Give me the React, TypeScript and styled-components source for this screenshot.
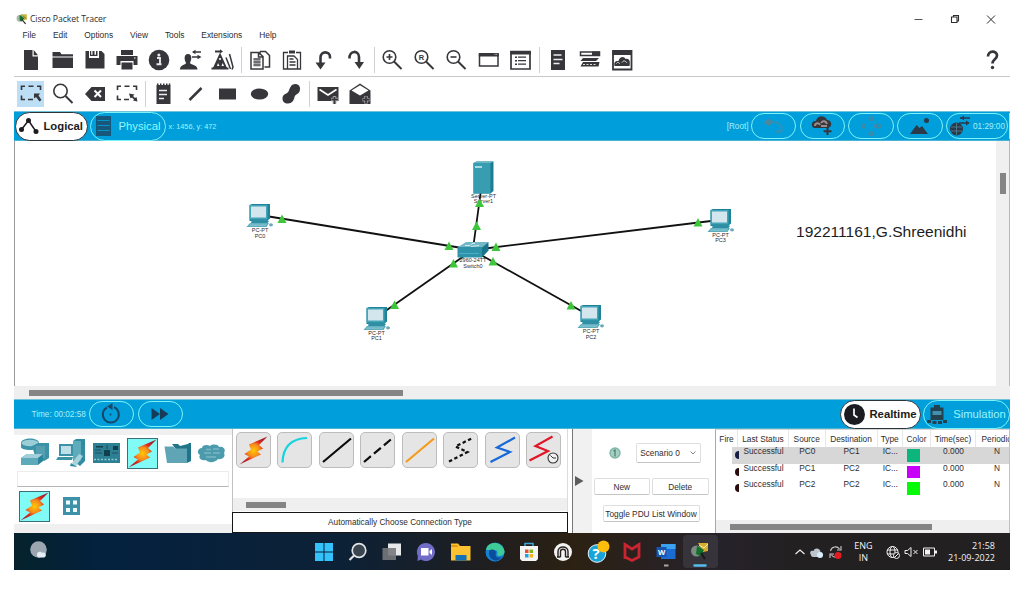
import React from 'react';
import styled, { createGlobalStyle, css } from 'styled-components';

const INK = '#37363b';
const BLUE = '#009fdc';
const CYAN = '#7df3f8';

const GlobalStyle = createGlobalStyle`
  * { box-sizing: border-box; }
  body {
    margin: 0;
    background: #fff;
    font-family: "Liberation Sans", Arial, sans-serif;
    font-size: 8.3px;
    color: #2e2e30;
    overflow: hidden;
  }
  svg { display: block; flex: none; }
`;

const Window = styled.div`
  width: 996px;
  height: 570px;
  margin-left: 14px;
  padding-top: 10px;
  display: flex;
  flex-direction: column;
  white-space: nowrap;
`;

const TitleBar = styled.header`
  height: 17px;
  display: flex;
  align-items: center;
  gap: 2px;
  padding: 0 13px 0 2px;
`;

const Title = styled.h1`
  margin: 0;
  flex: 1;
  font: 400 8.7px/16px "Open Sans", "Liberation Sans", sans-serif;
  letter-spacing: -0.1px;
`;

const WindowControls = styled.div`
  display: flex;
  gap: 24.5px;
`;

const MenuBar = styled.nav`
  height: 16px;
  display: flex;
  align-items: center;
  gap: 16.9px;
  padding-left: 8.5px;
  font-size: 8.4px;
`;

const Toolbar = styled.div<{ $height: number; $ruled?: boolean }>`
  height: ${p => p.$height}px;
  display: flex;
  align-items: center;
  padding-left: 1px;
  border-bottom: ${p => (p.$ruled ? '1px solid #c9c9c9' : 'none')};
`;

const Tool = styled.button<{ $active?: boolean }>`
  width: 32px;
  height: 26px;
  padding: 0;
  border: 0;
  display: flex;
  align-items: center;
  justify-content: center;
  color: ${INK};
  border-radius: 2px;
  background: ${p => (p.$active ? 'linear-gradient(90deg, transparent 2px, #bddff6 2px 29px, transparent 29px)' : 'none')};
`;

const HelpTool = styled(Tool)`
  margin-right: 2px;
`;

const Separator = styled.span<{ $width: number }>`
  width: ${p => p.$width}px;
  height: 26px;
  background: linear-gradient(#d2d2d2, #d2d2d2) center / 1px 100% no-repeat;
`;

const Spacer = styled.span`flex: 1;`;

const BlueBar = styled.div<{ $height: number }>`
  height: ${p => p.$height}px;
  display: flex;
  align-items: center;
  background: ${BLUE};
  border-top: 1px solid #6cc3da;
  border-bottom: 1px solid #4bb4d2;
  color: #a5f0f7;
`;

const BarText = styled.span<{ $size?: number; $left?: number; $right?: number }>`
  font-size: ${p => p.$size ?? 8.2}px;
  margin-left: ${p => p.$left ?? 0}px;
  margin-right: ${p => p.$right ?? 0}px;
`;

const Pill = styled.button<{ $width: number; $gap?: number }>`
  width: ${p => p.$width}px;
  height: 26px;
  margin-left: ${p => p.$gap ?? 0}px;
  padding: 0;
  border: 1.5px solid ${CYAN};
  border-radius: 13px;
  background: transparent;
  color: #a5f0f7;
  font: 8.2px "Liberation Sans", sans-serif;
  display: flex;
  align-items: center;
  justify-content: center;
  gap: 2px;
`;

const ModeTab = styled(Pill)<{ $on?: boolean }>`
  height: 29px;
  border-radius: 14.5px;
  font-size: 11.3px;
  gap: 6px;
  color: #98f5fa;
  ${p => p.$on && css`
    background: #fff;
    border-color: #28333c;
    color: #1c1c20;
    font-weight: 700;
    gap: 4px;
  `}
`;

const Workspace = styled.main`
  height: 245px;
  display: flex;
  border-left: 1px solid #9b9b9b;
  border-right: 1px solid #b8b8b8;
`;

const Canvas = styled.div`
  position: relative;
  flex: 1;
`;

const Wires = styled.svg`
  position: absolute;
  inset: 0;
`;

const Node = styled.div<{ $x: number; $y: number }>`
  position: absolute;
  left: ${p => p.$x - 15}px;
  top: ${p => p.$y - 141}px;
  transform: translateX(-50%);
  display: flex;
  flex-direction: column;
  align-items: center;
  font-size: 5.5px;
  line-height: 5.6px;
  text-align: center;
`;

const Note = styled.div`
  position: absolute;
  left: 781px;
  top: 82px;
  font-size: 15.55px;
  line-height: 18px;
  color: #1d1d1d;
`;

const VScroll = styled.div`
  width: 13px;
  background: #f0f0f0;
  padding: 32px 0 0 3.5px;
  &::before {
    content: '';
    display: block;
    width: 6px;
    height: 21px;
    background: #858585;
  }
`;

const HScroll = styled.div<{ $height: number; $from: number; $length: number }>`
  height: ${p => p.$height}px;
  flex: none;
  background: #efefef;
  display: flex;
  align-items: center;
  padding-left: ${p => p.$from}px;
  &::before {
    content: '';
    width: ${p => p.$length}px;
    height: 6px;
    background: #858585;
  }
`;

const BottomDock = styled.section`
  height: 104px;
  display: flex;
`;

const DevicePanel = styled.div`
  width: 218px;
  border-top: 6px solid #f0f0f0;
  border-bottom: 9px solid #f0f0f0;
  padding: 2px 3px 0;
`;

const DeviceRow = styled.div`
  height: 32px;
  display: flex;
  align-items: center;
`;

const DeviceCell = styled.div<{ $width?: number }>`
  width: ${p => p.$width ?? 35.6}px;
  display: flex;
  justify-content: center;
`;

const BoltTile = styled.div`
  width: 31px;
  height: 31px;
  border: 1px solid #3b6e78;
  background: #80fbf6;
  display: flex;
  align-items: center;
  justify-content: center;
`;

const SubtypeBox = styled.div`
  height: 16px;
  margin: 2px 0 3px;
  border: 1px solid #ececec;
  border-bottom-color: #b5b5b5;
`;

const CablePanel = styled.div`
  width: 336px;
  display: flex;
  flex-direction: column;
  border-left: 1px solid #c2c2c2;
  border-right: 1px solid #dcdcdc;
`;

const CableRow = styled.div`
  height: 69px;
  display: flex;
  gap: 6.5px;
  padding: 3px 0 0 2.5px;
`;

const CableButton = styled.button`
  width: 35px;
  height: 36px;
  padding: 0;
  border: 1px solid #bcbcbc;
  border-radius: 5px;
  background: #e5e5e5;
  display: flex;
  align-items: center;
  justify-content: center;
`;

const CableCaption = styled.div`
  height: 21px;
  margin: 1px -1px 0;
  border: 1px solid #151515;
  text-align: center;
  line-height: 19px;
  font-size: 8.25px;
`;

const Collapse = styled.div`
  width: 20px;
  margin-left: 4px;
  border-left: 1px solid #777;
  background: #f1f1f1;
  display: flex;
  align-items: center;
  padding-left: 2px;
`;

const Scenario = styled.div`
  width: 123px;
  padding-top: 14px;
  display: flex;
  flex-direction: column;
  align-items: flex-start;
`;

const ScenarioRow = styled.div<{ $top?: number; $left: number; $gap?: number }>`
  display: flex;
  align-items: center;
  gap: ${p => p.$gap ?? 0}px;
  margin: ${p => p.$top ?? 0}px 0 0 ${p => p.$left}px;
`;

const Field = styled.button<{ $width: number; $height: number }>`
  width: ${p => p.$width}px;
  height: ${p => p.$height}px;
  padding: 0;
  border: 1px solid #dedede;
  border-bottom-color: #c6c6c6;
  border-radius: 2px;
  background: #fff;
  color: #2e2e30;
  font: 8.3px "Liberation Sans", sans-serif;
  display: flex;
  align-items: center;
  justify-content: center;
  gap: 9px;
  overflow: hidden;
`;

const PduList = styled.div`
  flex: 1;
  min-width: 0;
  border-left: 1px solid #a8a8a8;
  border-right: 1px solid #c0c0c0;
  border-top: 1px solid #d5d5d5;
  display: flex;
  flex-direction: column;
`;

const gridColumns = css`
  display: grid;
  grid-template-columns: 22px 51px 36.5px 52px 25.5px 28px 45px 42px;
`;

const PduHead = styled.div`
  ${gridColumns}
  height: 17px;
  line-height: 18px;
  text-align: center;
  overflow: hidden;
`;

const HeadCell = styled.span`
  border-right: 1px solid #e8e8e8;
`;

const PduRow = styled.div<{ $selected?: boolean }>`
  ${gridColumns}
  height: 16.5px;
  line-height: 8px;
  text-align: center;
  overflow: hidden;
  background: ${p => (p.$selected ? 'linear-gradient(90deg, #fff 16px, #d7d7d7 16px)' : 'none')};
`;

const FireDot = styled.span<{ $color: string }>`
  width: 4px;
  height: 8px;
  margin: 4px 0 0 19px;
  border-radius: 4px 0 0 4px;
  background: ${p => p.$color};
`;

const Swatch = styled.span<{ $color: string }>`
  width: 12.5px;
  height: 12.5px;
  margin: 2px 0 0 4px;
  background: ${p => p.$color};
`;

const Taskbar = styled.footer`
  height: 37px;
  flex: none;
  display: flex;
  align-items: center;
  padding: 0 15px;
  color: #f2f2f2;
  font: 9px/11.5px "Open Sans", "Liberation Sans", sans-serif;
  background: linear-gradient(90deg, #05222c 0, #04213f 90px, #0d2136 330px, #1f1e20 470px, #2c2112 560px, #292120 630px, #26222a 700px, #232022 780px);
`;

const TaskIcons = styled.div`
  display: flex;
  margin-left: 257.5px;
`;

const TaskIcon = styled.div<{ $active?: boolean }>`
  width: 34.25px;
  height: 33px;
  display: flex;
  align-items: center;
  justify-content: center;
  border-radius: 4px;
  background: ${p => (p.$active ? '#37333a' : 'none')};
`;

const Tray = styled.div`
  display: flex;
  align-items: center;
  margin-left: auto;
`;

const TrayText = styled.div<{ $width: number; $align: 'center' | 'right' }>`
  width: ${p => p.$width}px;
  text-align: ${p => p.$align};
`;

type GlyphProps = { children: React.ReactNode; w?: number; h?: number };
const Glyph = ({ children, w = 24, h = 24 }: GlyphProps) => (
  <svg width={w} height={h} viewBox={`0 0 ${w} ${h}`} fill="currentColor">{children}</svg>
);

const stroke = (width: number, color = 'currentColor') => ({
  fill: 'none', stroke: color, strokeWidth: width,
});

const mainTools: React.ReactNode[][] = [
  [
    <path d="M5 2h8.500v6.500H19V22H5zM14.700 2L19 7.300h-4.300z" />,
    <path d="M1.500 4h7.500l1.500 2.200h11.500v2.200H1.500zM1.500 9.500H22V20H1.500z" />,
    <path d="M2.500 3H6v7h10V3h2.500l3 3v14.500h-19zM9.500 3h2v4.500h-2zM13 3h1.500v5H7V3h1.200v3.700H13z" />,
    <><path d="M6 2h12v5H6zM1.500 8h21v9h-4v-4h-13v4h-4zM6.500 14.500h11v7h-11z" /><path d="M19 10h1.500" {...stroke(1.2, '#fff')} /></>,
    <><circle cx="12" cy="12" r="10.3" /><path d="M10 10h3v6M9.500 16.300h5" {...stroke(1.9, '#e8e8e8')} /><circle cx="11.900" cy="7" r="1.500" fill="#e8e8e8" /></>,
    <><path d="M9 6c2.500 0 3.500 2 3.300 4.500-.2 2-.9 3-1.300 4.500 0 1.500 7.500 1.500 7.500 6.500H1c0-5 6.500-5 6-6.500-.5-1.500-1.300-2.500-1.400-4.500C5.500 8 6.500 6 9 6z" /><path d="M14 4h8M13 9h8" {...stroke(1.300)} /><path d="M16.500 1.700v4.600L13 4zM18.500 6.700v4.600L22.500 9z" /></>,
    <><path d="M4 2.500h5V1.200L12 3.500 9 5.500V4.500H4zM9 4.500l7.500 16.500h-15z" /><path d="M.500 19.500h17v2H.500z" /><circle cx="9" cy="11" r="1.100" fill="#fff" /><path d="M6 18l1-3 1.500 3zM10.500 18l1.200-3 1.300 3z" fill="#fff" /><path d="M15 9.500l4.500 11.500M18.500 6l3.500 13-1 2.500" {...stroke(1.500)} /></>,
  ],
  [
    <><path d="M12 3.500h5.500l4 4v11.500h-5M12 6.500V3.500" {...stroke(1.500)} /><path d="M3 4.500h7.500l4.500 4v12.500H3zM10.500 4.500v4.500H15" {...stroke(1.500)} /><path d="M5.500 10h7v8.500h-7z" opacity=".45" /><path d="M5.500 11h7M5.500 14h7M5.500 17h7" {...stroke(1)} /></>,
    <><path d="M8 4.500H3.500v16.500H8M16 4.500h4.500V21H7.500V8h6.500l3.500 3.500V21" {...stroke(1.300)} /><path d="M9 2.500h6v3H9z" /><path d="M9.500 11h4M9.500 14h6M9.500 17h6" {...stroke(1.300)} /></>,
    <><path d="M8.500 17V9.500c0-7 9.500-6.500 9.500-.5v1.500" {...stroke(2.600)} /><path d="M3.500 14.500h10l-5 7z" /></>,
    <><path d="M5.500 10.500c-.5-8.500 9.500-8.500 9.500-1.500v6" {...stroke(2.600)} /><path d="M10.500 14h9.500l-4.700 7z" /></>,
  ],
  [
    <><circle cx="9.500" cy="9" r="6.300" {...stroke(1.600)} /><path d="M14 13.500l7.500 7.500" {...stroke(1.900)} /><path d="M9.500 6v6M6.500 9h6" {...stroke(1.600)} /></>,
    <><circle cx="9.500" cy="9" r="6.300" {...stroke(1.600)} /><path d="M14 13.500l7.500 7.500" {...stroke(1.900)} /><text x="6.700" y="11.700" fontSize="7.500" fontWeight="700">R</text></>,
    <><circle cx="9.500" cy="9" r="6.300" {...stroke(1.600)} /><path d="M14 13.500l7.500 7.500" {...stroke(1.900)} /><path d="M6.500 9h6" {...stroke(1.600)} /></>,
    <><path d="M3.500 6.500h18.500v11.500H3.500z" {...stroke(1.500)} /><path d="M2.800 5h20v3.500h-20z" /><path d="M18.500 6.300h1M20.200 6.300h1" {...stroke(.8, '#fff')} /></>,
    <><path d="M3 3.500h19v17.500H3z" {...stroke(1.700)} /><path d="M2.300 3h20.500v3.500H2.300zM7 8.500h2v1.500H7zM7 12h2v1.500H7zM7 15.500h2v1.500H7z" /><path d="M10 9.200h8M10 12.700h8M10 16.200h8" {...stroke(1.300)} /></>,
  ],
  [
    <><path d="M5 2h14v20H5z" /><path d="M7.500 7h8M7.500 11.500h9M7.500 15.500h6" {...stroke(1.600, '#eee')} /></>,
    <><path d="M2.500 4h19v3.500h-19z" {...stroke(1.500)} /><path d="M14 3.500h8v4h-8zM5 10h16l-3 3H2.500zM5 14h16.500l-1 4.500H2.500z" /><path d="M5 16.500h13" {...stroke(1.200, '#ddd')} strokeDasharray="2 1.500" /></>,
    <><path d="M3 3h18.500v18.500H3z" {...stroke(1.800)} /><path d="M2.500 3h19.500v4H2.500zM4.500 18c-1-5 2-5 4-5 1-5 6-5 7-2 4-1 5 3 4 7z" /><path d="M6.500 15.500c1-2 3-1 3 .5M12 14.500c2-3 4-1 5 .5" {...stroke(1, '#ddd')} /></>,
  ],
];

const Marquee = ({ dark }: { dark?: boolean }) => (
  <Glyph>
    <path d="M2.500 8V4.300H6M9.500 4.300h5M18 4.300h3.500V8M2.500 13.500v4H6M9 17.500h5" {...stroke(1.600)} />
    {dark
      ? <path d="M15 11.500h6l-1.500 2 3 4.500-2 1.500-3.500-4.500-2 1.500z" />
      : <path d="M14 11.500l5.500 1-1.500 1.500 2 2 1.500-1 1 4.500-4.500-1 1-1-2-2-1.500 1z" />}
  </Glyph>
);

const editTools: React.ReactNode[][] = [
  [
    <Marquee dark />,
    <Glyph><circle cx="9.500" cy="9" r="6.700" {...stroke(1.600)} /><path d="M14.500 14l7 7" {...stroke(2)} /></Glyph>,
    <Glyph><path d="M2 12l6.500-7H22v14H8.500z" /><path d="M11.500 8.500l6.500 6.500M18 8.500l-6.500 6.500" {...stroke(2, '#fff')} /></Glyph>,
    <Marquee />,
  ],
  [
    <Glyph><path d="M5.500 3h14v19h-14zM6 1.500h1.500V4H6zM9 1.500h1.500V4H9zM12 1.500h1.500V4H12zM15 1.500h1.500V4H15zM17.800 1.500h1.500V4h-1.500z" /><path d="M8 8.500h8M8 12.500h8M8 16.500h5" {...stroke(1.500, '#eee')} /></Glyph>,
    <Glyph><path d="M6.500 18L18.500 6" {...stroke(2.500)} /></Glyph>,
    <Glyph><path d="M4 6.500h17v11H4z" /></Glyph>,
    <Glyph><ellipse cx="12.500" cy="12" rx="8.700" ry="5.500" /></Glyph>,
    <Glyph><path d="M3.500 16.500c0-5 4-4 6-7 1.500-3 2-7.500 7-7.500 4 0 5.500 4 4 7.500-1.500 3-4 2.500-5 5.500-.5 3-2.500 6.500-6.500 6.500-3.500 0-5.500-2-5.500-5z" /></Glyph>,
  ],
  [
    <Glyph><path d="M1.500 5h21v14h-21z" /><path d="M3.500 7.500L12 13l8.500-5.500" {...stroke(1.600, '#fff')} /><path d="M18.500 22v-8M15 17.500h7" {...stroke(3.500, '#999')} /><path d="M18.500 22v-7M15.500 17.500h6.500" {...stroke(1.500)} /></Glyph>,
    <Glyph><path d="M1.500 8.500L12 1.500l10.500 7V22h-21z" /><path d="M3.500 8.500L12 3.200l8.500 5.300L12 13.500z" fill="#fff" /><path d="M18 14v7.500M14.500 17.700h7" {...stroke(3.600, '#999')} /><path d="M18 14.500v6.500M15 17.700h6" {...stroke(1.700)} /></Glyph>,
  ],
];

const PcIcon = () => (
  <Glyph w={28} h={24}>
    <path d="M3.500 1L6 0h18v14.500L21 17H3.500z" fill="#1d8398" />
    <path d="M3.500 1h18v14.500h-18z" fill="#45a4b8" />
    <path d="M5 2.500h15V13.500H5z" fill="#d3e6ee" />
    <path d="M6 15.500h14l3 1.500-1.500 2H5z" fill="#2e8fa4" />
    <path d="M4 19h19l-2.500 4H.5z" fill="#53a9bb" />
    <path d="M4 20.200h17M3 21.700h17" stroke="#a9d3dd" strokeWidth=".6" />
    <ellipse cx="25" cy="20.800" rx="2" ry="1.600" fill="#6aa9b9" />
  </Glyph>
);

const ServerIcon = () => (
  <Glyph w={22} h={33}>
    <path d="M1 2l3-1.500h17V30l-3 2.500H1z" fill="#1c7c91" />
    <path d="M1 2h17v30.500H1z" fill="#399db2" />
    <path d="M1 2l3-1.500h17L18 2z" fill="#69b8c8" />
    <path d="M2.500 6h7" stroke="#a8dbe5" strokeWidth="2" />
  </Glyph>
);

const SwitchIcon = () => (
  <Glyph w={32} h={17}>
    <path d="M1 6L9 1h22.500L25 7z" fill="#73b8c6" />
    <path d="M.5 6H25v10.500H.5z" fill="#2e92a8" />
    <path d="M25 6.500L31.500 1v8.500L25 16.500z" fill="#1b7489" />
    <path d="M8 4.500h5l2-2 3 0M14 5.500l8-1" fill="none" stroke="#d8eef3" strokeWidth=".9" />
    <path d="M2 12.500h20" stroke="#4eb0c2" strokeWidth="1" />
  </Glyph>
);

const nodes = [
  { x: 260, y: 204, icon: <PcIcon />, lines: ['PC-PT', 'PC0'] },
  { x: 376.5, y: 306.5, icon: <PcIcon />, lines: ['PC-PT', 'PC1'] },
  { x: 591, y: 305, icon: <PcIcon />, lines: ['PC-PT', 'PC2'] },
  { x: 720.5, y: 208.5, icon: <PcIcon />, lines: ['PC-PT', 'PC3'] },
  { x: 483.5, y: 160.500, icon: <ServerIcon />, lines: ['Server-PT', 'Server1'] },
  { x: 473, y: 241, icon: <SwitchIcon />, lines: ['2960-24TT', 'Switch0'] },
];

const links = [
  [269, 216.500, 462, 248], [481, 190, 473.500, 245], [711, 221, 485, 248.500],
  [384, 312, 464, 256], [583, 312, 481, 255],
];

const linkLights = [
  [282, 219], [449, 246], [479.500, 203], [476.500, 226], [496, 247],
  [698, 222.500], [453.500, 263.500], [394.500, 305], [493, 261.500], [571, 305.500],
];

const Bolt = ({ size = 29, id }: { size?: number; id: string }) => (
  <svg width={size} height={size} viewBox="0 0 29 29">
    <defs>
      <radialGradient id={id} gradientUnits="userSpaceOnUse" cx="14.500" cy="14.500" r="14">
        <stop offset="0" stopColor="#ffc800" />
        <stop offset=".45" stopColor="#f58a1e" />
        <stop offset=".7" stopColor="#e02b1a" />
        <stop offset="1" stopColor="#a8202c" />
      </radialGradient>
    </defs>
    <path d="M28.500.5L10 8.500l2 5L5.500 18 10 20.500.5 28.500 22 18.500l-3.500-3 5.500-3-4-3.500z" fill={`url(#${id})`} />
  </svg>
);

const Devices = {
  network: (
    <Glyph w={30} h={30}>
      <path d="M1 5c0-6 18-6 18 0v4C19 13 1 13 1 9z" fill="#3d94a6" /><ellipse cx="10" cy="5" rx="8.500" ry="3.200" fill="#9ccdd7" />
      <path d="M12 8l6-3h11v15l-5 3-8-2z" fill="#3a93a7" /><path d="M16 8h9v12h-9z" fill="#559fb0" />
      <path d="M1 20l6-4h16v7l-5 4H1z" fill="#2b8499" /><path d="M1 20h17v7H1z" fill="#5daabb" /><path d="M1 20l6-4h16l-5 4z" fill="#a2cfd9" />
    </Glyph>
  ),
  end: (
    <Glyph w={30} h={30}>
      <path d="M17 3l3-2h9v22l-5 5-7-5z" fill="#2f8ca1" /><path d="M17 3h8v20h-8z" fill="#5eabbb" />
      <path d="M3 6h14v12H3z" fill="#3c93a7" /><path d="M5 8h10v8H5z" fill="#bedfe7" />
      <path d="M2 19h15l-1 3H0z" fill="#3b93a6" /><path d="M16 25l7-9 4 2-7 10z" fill="#a6d2db" /><path d="M15 25l5 3 1 1-7-1z" fill="#2f8ca1" />
    </Glyph>
  ),
  board: (
    <Glyph w={28} h={20}>
      <path d="M0 0h27v20H0z" fill="#2d7f93" /><path d="M11 7h6v6h-6zM20 3h5v4h-5zM3 3h7v1.500H3z" fill="#123f4e" />
      <path d="M1 16.500h24" stroke="#8cc9d6" strokeWidth="1.500" strokeDasharray="2 1.500" /><path d="M2 7h6M2 10h7M19 10h6M14 2v4" stroke="#1a5363" strokeWidth="1.200" />
    </Glyph>
  ),
  folder: (
    <Glyph w={28} h={22}>
      <path d="M8 2h6l2 2 8-2 1-1h2v18l-4 2z" fill="#1f7488" /><path d="M.500 4.500h9l2 2H23v14.500H3z" fill="#60a5b5" />
    </Glyph>
  ),
  cloud: (
    <Glyph w={30} h={22}>
      <path d="M5 6c0-3 5-4 8-2 2-2 8-2 9 1 5-1 7 3 5 6 2 4-2 7-6 6-3 4-10 4-12 1-5 1-8-2-6-5-4-2-2-7 2-7z" fill="#4c9bad" />
      <path d="M9 7.500h5M16 7h6M7 11h7M16 11h7M9 15h10" stroke="#78b6c4" strokeWidth="1.300" />
    </Glyph>
  ),
  component: (
    <Glyph w={17} h={20}>
      <path d="M0 1h17v18H0z" fill="#3d92a8" /><path d="M3 4.500h4v4H3zM10 4.500h4v4h-4zM3 12h4v4H3zM10 12h4v4h-4z" fill="#effbfd" />
    </Glyph>
  ),
};

const line = (d: string, color: string, dash?: string) => (
  <svg width="33" height="34" viewBox="0 0 33 34">
    <path d={d} fill="none" stroke={color} strokeWidth="2.200" strokeDasharray={dash} />
  </svg>
);

const cables = [
  <Bolt id="cable-bolt" />,
  line('M4.500 29.500C5 14 13 5.500 29 5', '#16d4e0'),
  line('M3 29L31 5.500', '#0c0c0c'),
  line('M3 29L31 5.500', '#0c0c0c', '9 4'),
  line('M3 29L31 5.500', '#f59b1c'),
  line('M5 28.500L23.500 19 11.500 13.500 28.500 5', '#111', '3.500 2.500'),
  line('M4.500 29L24 19 11 14.500 29 4.500', '#1769d8'),
  <svg width="33" height="34" viewBox="0 0 33 34">
    <path d="M2.500 27.500L21 18 8.500 13 25.500 3.500" fill="none" stroke="#e01629" strokeWidth="2.200" />
    <circle cx="26" cy="25" r="5" fill="#f2f2f2" stroke="#333" strokeWidth="1.100" />
    <path d="M23.500 22.500l2.500 2.500h3" fill="none" stroke="#333" />
  </svg>,
];

const pdus = [
  { dot: '#171c45', from: 'PC0', to: 'PC1', type: 'IC...', color: '#0cb57c' },
  { dot: '#2a0b0e', from: 'PC1', to: 'PC2', type: 'IC...', color: '#c800fa' },
  { dot: '#2a0b0e', from: 'PC2', to: 'PC2', type: 'IC...', color: '#05fb05' },
];

const TracerMark = ({ size }: { size: number }) => (
  <svg width={size} height={size} viewBox="0 0 20 20">
    <path d="M8 2h10v9l-5 1z" fill="#c7b638" /><path d="M8 3l9 6" stroke="#625c20" />
    <circle cx="6.500" cy="9" r="5.500" fill="#a9b9a6" /><path d="M6 3l8 6-5 5-3-2z" fill="#14702c" />
    <path d="M10 11l6 7" stroke="#252c25" strokeWidth="2" />
  </svg>
);

const taskIcons = [
  <Glyph w={20} h={20}><path d="M1 1h8.500v8.500H1zM10.500 1H19v8.500h-8.500zM1 10.500h8.500V19H1zM10.500 10.500H19V19h-8.500z" fill="#34c2fa" /></Glyph>,
  <Glyph w={20} h={20}><circle cx="11" cy="8.500" r="6.800" fill="#3b4550" stroke="#e1e4e7" strokeWidth="1.700" /><path d="M6 13.500L1.500 18" stroke="#e1e4e7" strokeWidth="2.200" /></Glyph>,
  <Glyph w={20} h={20}><path d="M6 1.500h13v12H6z" fill="#e6e8ea" /><path d="M.500 6H14v12H.500z" fill="#77797c" opacity=".9" /></Glyph>,
  <Glyph w={20} h={20}><path d="M10 1a9 9 0 11-5 16.500L1.500 19l.3-5A9 9 0 0110 1z" fill="#716cc5" /><path d="M5 6h7.500v7.500H5zM13.500 9l2.500-2v6l-2.500-2z" fill="#fff" /></Glyph>,
  <Glyph w={20} h={20}><path d="M0 1.500h7l2 2.500h10.500v14.500H0z" fill="#fdc231" /><path d="M0 3h6l1.500 2H0z" fill="#e69b10" /><path d="M4.500 13h11v5.500h-11z" fill="#1471b8" /></Glyph>,
  <Glyph w={20} h={20}><circle cx="10" cy="10" r="9.500" fill="#1680d2" /><path d="M1 8C2-1 17-2 19.500 9c.5 5-5 6-8 4 2-2 1-5-2-5-4 0-7 0-8.500 0z" fill="#3dcb98" /><path d="M4 9c3-3 7-1 7 2-2 4 3 6 6 4-4 6-14 4-13-6z" fill="#0b4d9c" /></Glyph>,
  <Glyph w={20} h={20}><path d="M6 4V1.500h8V4" fill="none" stroke="#39a7dc" strokeWidth="1.500" /><path d="M1 4h18v13l-2 2H3l-2-2z" fill="#f5f5f5" /><path d="M6 7.500h3.500V11H6z" fill="#e5542b" /><path d="M10.500 7.500H14V11h-3.500z" fill="#7cb722" /><path d="M6 12h3.500v3.500H6z" fill="#23a1e3" /><path d="M10.500 12H14v3.500h-3.500z" fill="#f6b51a" /></Glyph>,
  <Glyph w={20} h={20}><circle cx="10" cy="10" r="9" fill="#f3f3f1" /><path d="M5 15V9.500c0-6 10-6 10 0V15M7.500 15V9.500c0-3 5-3 5 0V15M4 15h3.500M12.500 15H16" fill="none" stroke="#28221f" strokeWidth="1.400" /></Glyph>,
  <Glyph w={24} h={26}><circle cx="11" cy="14.500" r="8.800" fill="#18a3d9" stroke="#eefaff" /><text x="6.500" y="20" fontSize="15" fontWeight="700" fill="#fff">?</text><circle cx="17.500" cy="7.500" r="6" fill="#ffbd0c" /></Glyph>,
  <Glyph w={20} h={20}><path d="M3 17V2.500l7 4.500 7-4.500V15l-7 3.500L3 15" fill="none" stroke="#c92531" strokeWidth="2.800" /></Glyph>,
  <Glyph w={20} h={30}><path d="M5 7h14.500v15H5z" fill="#1c6bd2" /><path d="M5 7h14.500v5H5z" fill="#3aa2ee" /><path d="M.500 10h10v10h-10z" fill="#1656b3" /><text x="2" y="17.800" fontSize="7.500" fontWeight="700" fill="#fff">W</text><path d="M8 28.500h4.500" stroke="#aaa6a6" strokeWidth="2" /></Glyph>,
];

export default function App() {
  return (
    <>
      <GlobalStyle />
      <Window>
        <TitleBar>
          <TracerMark size={12} />
          <Title>Cisco Packet Tracer</Title>
          <WindowControls>
            <Glyph w={12} h={12}><path d="M2.500 6.500h8" {...stroke(1, '#555')} /></Glyph>
            <Glyph w={12} h={12}><path d="M2.500 4h5.500v5.500H2.500zM4.500 4V2.500h5V8H8" {...stroke(1.100)} /></Glyph>
            <Glyph w={12} h={12}><path d="M2 2.500l8 8M10 2.500l-8 8" {...stroke(1)} /></Glyph>
          </WindowControls>
        </TitleBar>
        <MenuBar>
          {['File', 'Edit', 'Options', 'View', 'Tools', 'Extensions', 'Help'].map(m => <span key={m}>{m}</span>)}
        </MenuBar>

        <Toolbar $height={34} $ruled>
          {mainTools.map((group, g) => (
            <React.Fragment key={g}>
              {g > 0 && <Separator $width={[0, 5, 4, 6][g]} />}
              {group.map((art, i) => <Tool key={i}><Glyph>{art}</Glyph></Tool>)}
            </React.Fragment>
          ))}
          <Spacer />
          <HelpTool>
            <Glyph><path d="M8 8.500c0-6.500 9-6 9-1 0 4-4.500 3.500-4.500 8" {...stroke(2.700)} /><circle cx="12.500" cy="19.500" r="1.700" /></Glyph>
          </HelpTool>
        </Toolbar>
        <Toolbar $height={34}>
          {editTools.map((group, g) => (
            <React.Fragment key={g}>
              {g > 0 && <Separator $width={[0, 4, 5][g]} />}
              {group.map((art, i) => <Tool key={i} $active={g === 0 && i === 0}>{art}</Tool>)}
            </React.Fragment>
          ))}
        </Toolbar>

        <BlueBar $height={30}>
          <ModeTab $width={73.500} $gap={0.500} $on>
            <Glyph w={20} h={18}>
              <path d="M2.500 12.500L9.500 3.500l7.500 11" {...stroke(1.500)} />
              <circle cx="2.500" cy="12.500" r="2.500" /><circle cx="9.500" cy="3.500" r="2.500" /><circle cx="17" cy="14.500" r="2.500" />
            </Glyph>
            Logical
          </ModeTab>
          <ModeTab $width={76} $gap={2}>
            <Glyph w={17} h={20}>
              <path d="M1 0h15v20H1z" fill="#17577c" />
              <path d="M2.500 4.500h12M2.500 9.500h12M2.500 14.500h12" stroke="#0b93c8" strokeWidth="1.200" />
            </Glyph>
            Physical
          </ModeTab>
          <BarText $size={7.300} $left={2.500}>x: 1456, y: 472</BarText>
          <Spacer />
          <BarText $right={2.500}>[Root]</BarText>
          <Pill $width={45}>
            <Glyph><path d="M1.500 8.500L7 4.500l4.500 4L7 12z" fill="#4c87a0" /><path d="M9 8.500c4-1 8-.5 9.500 4" {...stroke(1.600, '#3c8db0')} /><path d="M14 17.500h5.500V12" {...stroke(1.800, '#3c8db0')} /></Glyph>
          </Pill>
          <Pill $width={45.500} $gap={3.500}>
            <Glyph><path d="M4 14c-4-2-2-8 2-7 1-6 9-6 11-1 5 0 6 7 1 8z" fill={INK} /><path d="M5 12c0-3 4-4 5-1M11 9c2-3 5-2 6 1M11 12h6" {...stroke(2, '#9b8e8c')} /><path d="M17.500 13.500V21M13.500 17.300h8" {...stroke(2, INK)} /></Glyph>
          </Pill>
          <Pill $width={45.500} $gap={3}>
            <Glyph w={22} h={22}><g {...stroke(1.500, '#4486a2')}><circle cx="11" cy="3.500" r="1.800" /><circle cx="11" cy="18.500" r="1.800" /><circle cx="3.500" cy="11" r="1.800" /><circle cx="18.500" cy="11" r="1.800" /></g><path d="M7.500 9v4M14.500 9v4" {...stroke(1, '#3b8fae')} /></Glyph>
          </Pill>
          <Pill $width={45.500} $gap={3.500}>
            <Glyph><path d="M2 20l6.500-9 3 3 2.500-2 6 8z" fill="#2a3a49" /><circle cx="18.500" cy="6.500" r="2.500" fill="#2a3a49" /></Glyph>
          </Pill>
          <Pill $width={62} $gap={3.500}>
            <Glyph w={22}><circle cx="7.500" cy="15" r="6.500" fill="#2a3a49" /><path d="M2 13h11M2 17h11M7.500 9v12" {...stroke(.7, '#5d8aa0')} /><path d="M11 4h10M10 9h10" {...stroke(1.300, '#2a3a49')} /><path d="M15 1.500v5L11.500 4zM17 6.500v5l3.500-2.500z" fill="#2a3a49" /></Glyph>
            01:29:00
          </Pill>
          <Separator $width={2} />
        </BlueBar>

        <Workspace>
          <Canvas>
            <Wires width="981" height="245" viewBox="15 141 981 245">
              {links.map(([x1, y1, x2, y2], i) => (
                <line key={i} x1={x1} y1={y1} x2={x2} y2={y2} stroke="#111" strokeWidth="1.800" />
              ))}
            </Wires>
            {nodes.map(n => (
              <Node key={n.lines[1]} $x={n.x} $y={n.y}>
                {n.icon}
                {n.lines.map(l => <span key={l}>{l}</span>)}
              </Node>
            ))}
            <Wires width="981" height="245" viewBox="15 141 981 245">
              {linkLights.map(([x, y], i) => (
                <path key={i} d={`M${x} ${y - 4.500}l4.500 8.500h-9z`} fill="#3fc53c" />
              ))}
            </Wires>
            <Note>192211161,G.Shreenidhi</Note>
          </Canvas>
          <VScroll />
        </Workspace>
        <HScroll $height={13} $from={14.500} $length={374.500} />

        <BlueBar $height={30}>
          <BarText $left={17.500} $right={3}>Time: 00:02:58</BarText>
          <Pill $width={45}>
            <Glyph><path d="M8 5.500a8 8 0 107-.3" {...stroke(2, '#17486a')} /><path d="M13.500 1v7L8 4.500z" fill="#17486a" /><circle cx="11.500" cy="12.500" r="1" fill="#17486a" /></Glyph>
          </Pill>
          <Pill $width={45} $gap={4}>
            <Glyph><path d="M3.500 6l8.500 6-8.500 6zM12 6l8.500 6-8.500 6z" fill="#173c58" /></Glyph>
          </Pill>
          <Spacer />
          <ModeTab $width={81} $on>
            <Glyph w={21} h={21}><circle cx="10.500" cy="10.500" r="10.500" /><path d="M10 4.500V11l3.500 2.500" {...stroke(1.700, '#fff')} /></Glyph>
            Realtime
          </ModeTab>
          <ModeTab $width={87} $gap={2}>
            <Glyph w={20} h={20}><path d="M7 1h6v2.500h3.500V16h-13V3.500H7zM0 16h4v3H0zM16 16h4v3h-4zM5.500 17h4v3h-4zM11 17h4v3h-4z" fill="#24414f" /><path d="M5.500 7h9v4h-9z" fill="#438fae" /></Glyph>
            Simulation
          </ModeTab>
        </BlueBar>

        <BottomDock>
          <DevicePanel>
            <DeviceRow>
              <DeviceCell>{Devices.network}</DeviceCell>
              <DeviceCell $width={37}>{Devices.end}</DeviceCell>
              <DeviceCell>{Devices.board}</DeviceCell>
              <DeviceCell><BoltTile><Bolt id="group-bolt" /></BoltTile></DeviceCell>
              <DeviceCell>{Devices.folder}</DeviceCell>
              <DeviceCell $width={34}>{Devices.cloud}</DeviceCell>
            </DeviceRow>
            <SubtypeBox />
            <DeviceRow>
              <DeviceCell><BoltTile><Bolt id="type-bolt" /></BoltTile></DeviceCell>
              <DeviceCell $width={37}>{Devices.component}</DeviceCell>
            </DeviceRow>
          </DevicePanel>

          <CablePanel>
            <CableRow>
              {cables.map((c, i) => <CableButton key={i}>{c}</CableButton>)}
            </CableRow>
            <HScroll $height={13} $from={13} $length={40} />
            <CableCaption>Automatically Choose Connection Type</CableCaption>
          </CablePanel>

          <Collapse>
            <Glyph w={9} h={12}><path d="M0 1l8.500 5L0 11z" fill="#5d5d5d" /></Glyph>
          </Collapse>

          <Scenario>
            <ScenarioRow $left={17} $gap={15}>
              <Glyph w={12} h={12}><circle cx="6" cy="6" r="5.700" fill="#7fb5a6" /><circle cx="6" cy="6" r="4.300" fill="#a5cfc1" /><path d="M4.500 4L6 3v6.500" {...stroke(1.200, '#467d6f')} /></Glyph>
              <Field $width={65} $height={20}>
                Scenario 0
                <Glyph w={8} h={6}><path d="M1.500 1.500L4 4l2.500-2.500" {...stroke(.9, '#777')} /></Glyph>
              </Field>
            </ScenarioRow>
            <ScenarioRow $left={1.500} $top={15} $gap={2}>
              <Field $width={56.500} $height={17}>New</Field>
              <Field $width={56.500} $height={17}>Delete</Field>
            </ScenarioRow>
            <ScenarioRow $left={10.500} $top={10}>
              <Field $width={97} $height={17}>Toggle PDU List Window</Field>
            </ScenarioRow>
          </Scenario>

          <PduList>
            <PduHead>
              {['Fire', 'Last Status', 'Source', 'Destination', 'Type', 'Color', 'Time(sec)', 'Periodic'].map(h => (
                <HeadCell key={h}>{h}</HeadCell>
              ))}
            </PduHead>
            {pdus.map((p, i) => (
              <PduRow key={i} $selected={i === 0}>
                <FireDot $color={p.dot} />
                <span>Successful</span>
                <span>{p.from}</span>
                <span>{p.to}</span>
                <span>{p.type}</span>
                <Swatch $color={p.color} />
                <span>0.000</span>
                <span>N</span>
              </PduRow>
            ))}
            <Spacer />
            <HScroll $height={13} $from={14} $length={202} />
          </PduList>
        </BottomDock>

        <Taskbar>
          <Glyph w={20} h={22}><circle cx="9.500" cy="8.500" r="8.300" fill="#9ba6b0" /><path d="M8 14c0-4 4-4 5-2 3-2 6 3 2 4.500h-5c-1 0-2-1-2-2.500z" fill="#e6eef5" /></Glyph>
          <TaskIcons>
            {taskIcons.map((t, i) => <TaskIcon key={i}>{t}</TaskIcon>)}
            <TaskIcon $active>
              <Glyph w={20} h={30}>
                <path d="M8 6h10v8l-5 1z" fill="#d5ae32" /><path d="M9 8l5 3 4-4" stroke="#fff0a0" fill="none" />
                <circle cx="6.500" cy="14" r="5.500" fill="#7c8c82" /><path d="M7 9l7 4-4 6-4-2z" fill="#11702a" /><path d="M11 16l4 6" stroke="#171a18" strokeWidth="2" />
                <path d="M4.500 28.500h11" stroke="#55bdf0" strokeWidth="2.400" strokeLinecap="round" />
              </Glyph>
            </TaskIcon>
          </TaskIcons>
          <Tray>
            <Glyph w={15} h={14}><path d="M3.500 9L8 5l4.500 4" {...stroke(1.100)} /></Glyph>
            <Glyph w={20} h={16}><path d="M4 11c-2-3 0-5 2.500-4 1-4 7-3 7 1 3 1 3 5 0 5H6c-1 0-2-1-2-2z" fill="#bdc4cb" /><circle cx="13" cy="11" r="3" fill="#d7eefb" /></Glyph>
            <Glyph w={18} h={16}><path d="M3.500 7a5 5 0 019-2M14 2v4h-4M13.500 9a5 5 0 01-9 2M3 14v-4h4" {...stroke(1.100, '#d0c8c8')} /><circle cx="11" cy="11.500" r="3.500" fill="#e21b23" /></Glyph>
            <TrayText $width={37} $align="center">ENG<br />IN</TrayText>
            <Glyph w={21} h={16}><g {...stroke(1)}><circle cx="10.500" cy="8" r="5.500" /><ellipse cx="10.500" cy="8" rx="2.500" ry="5.500" /><path d="M5 6h11M5 10h11" /></g><circle cx="14.500" cy="11.500" r="3" fill="#232022" stroke="#eee" /><path d="M12.500 13.500l4-4" {...stroke(1)} /></Glyph>
            <Glyph w={17} h={14}><path d="M2 5.500h2.500L8 2.500v9l-3.500-3H2zM10.500 5l4 4M14.500 5l-4 4" {...stroke(1)} /></Glyph>
            <Glyph w={20} h={14}><path d="M3.500 3h11v8h-11z" {...stroke(1)} /><path d="M5 4.500h5v5H5zM15 5.500h2v3h-2z" /></Glyph>
            <TrayText $width={55} $align="right">21:58<br />21-09-2022</TrayText>
          </Tray>
        </Taskbar>
      </Window>
    </>
  );
}
